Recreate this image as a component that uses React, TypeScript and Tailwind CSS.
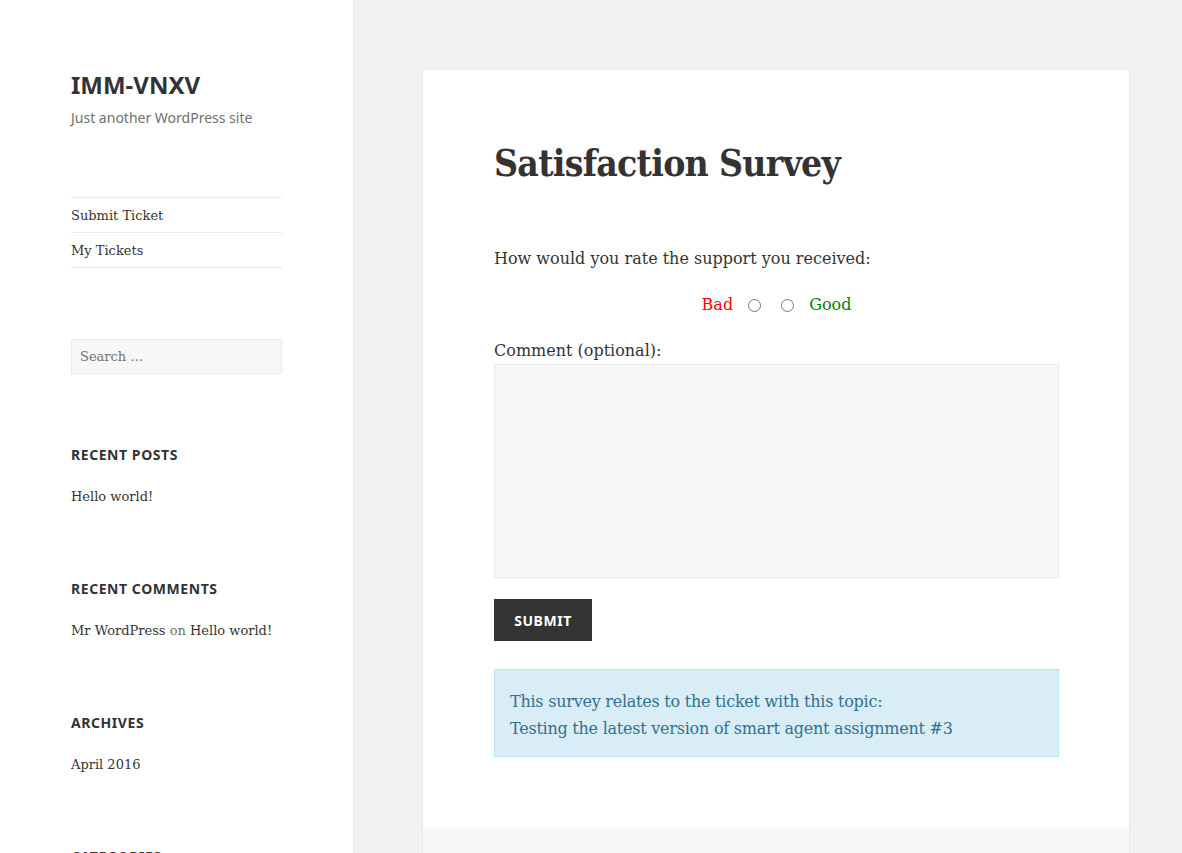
import React from 'react';

const serif = "font-['DejaVu_Serif',serif]";
const sans = "font-['Noto_Sans',sans-serif]";

const widgets = [
  { title: 'Recent Posts', body: <a>Hello world!</a> },
  {
    title: 'Recent Comments',
    body: (
      <span className="whitespace-nowrap">
        <a>Mr WordPress</a> <span className="text-[#707070]">on</span> <a>Hello world!</a>
      </span>
    ),
  },
  { title: 'Archives', body: <a>April 2016</a> },
  { title: 'Categories', body: <a>Uncategorized</a> },
];

const Sidebar: React.FC = () => (
  <aside className="w-[353px] shrink-0 bg-white shadow-[0_0_1px_rgba(0,0,0,0.15),0_0_3px_rgba(0,0,0,0.04)] relative z-10">
    <div className="ml-[71px] w-[211px] pt-[69px]">
      {/* Site branding */}
      <p className={`${sans} text-[24px] leading-[32px] font-bold text-[#333]`}>IMM-VNXV</p>
      <p className={`${sans} text-[14px] leading-[22px] text-[#707070] mt-[6px]`}>Just another WordPress site</p>

      {/* Menu */}
      <nav className={`${serif} mt-[68px] border-t border-[#eaeaea] text-[13px] text-[#333]`}>
        <div className="h-[35px] flex items-center pt-[1px] border-b border-[#eaeaea]">Submit Ticket</div>
        <div className="h-[35px] flex items-center pt-[1px] border-b border-[#eaeaea]">My Tickets</div>
      </nav>

      {/* Search */}
      <div className="mt-[71px] h-[35px] border border-[#eaeaea] bg-[#f7f7f7] flex items-center px-[8px]">
        <span className={`${serif} text-[13px] text-[#707070]`}>Search …</span>
      </div>

      {widgets.map((w, i) => (
        <section key={w.title} className={i === 0 ? 'mt-[69px]' : 'mt-[68px]'}>
          <h2 className={`${sans} uppercase font-bold text-[14px] leading-[24px] tracking-[0.04em] text-[#333]`}>
            {w.title}
          </h2>
          <div className={`${serif} text-[13px] leading-[24px] text-[#333] mt-[18px]`}>{w.body}</div>
        </section>
      ))}
    </div>
  </aside>
);

const SurveyCard: React.FC = () => (
  <article className="w-[706px] bg-white shadow-[0_0_1px_rgba(0,0,0,0.2)]">
    <div className="pl-[71px] pr-[70px] pt-[71px] pb-[71px]">
      <h1 className={`${serif} font-bold font-stretch-condensed text-[37px] leading-[44px] tracking-[-0.02em] text-[#333]`}>
        Satisfaction Survey
      </h1>

      <p className={`${serif} mt-[60px] text-[16px] leading-[28px] text-[#333]`}>
        How would you rate the support you received:
      </p>

      <div className={`${serif} mt-[18px] h-[28px] flex items-center justify-center text-[16px]`}>
        <span className="text-[#ff0000]">Bad</span>
        <input type="radio" name="rating" className="m-0 ml-[15px] w-[13px] h-[13px]" />
        <input type="radio" name="rating" className="m-0 ml-[20px] w-[13px] h-[13px]" />
        <span className="text-[#008000] ml-[15px]">Good</span>
      </div>

      <label className={`${serif} block mt-[19px] text-[16px] leading-[26px] text-[#333]`}>Comment (optional):</label>
      <textarea className="block w-full h-[214px] bg-[#f7f7f7] border border-[#eaeaea] resize-none outline-none" />

      <button
        className={`${sans} mt-[21px] h-[42px] w-[98px] bg-[#333] text-white uppercase font-bold text-[14px] tracking-[0.04em]`}
      >
        Submit
      </button>

      <div className={`${serif} mt-[28px] bg-[#d9edf7] border border-[#bce8f1] text-[#31708f] pl-[15px] pt-[18px] pb-[14px] text-[16px] leading-[27px] tracking-[-0.015em]`}>
        <p>This survey relates to the ticket with this topic:</p>
        <p>Testing the latest version of smart agent assignment #3</p>
      </div>
    </div>
    <div className="h-[60px] bg-[#f7f7f7]" />
  </article>
);

export default function App() {
  return (
    <div className="flex h-screen overflow-hidden bg-[#f1f1f1]">
      <Sidebar />
      <main className="flex-1 pt-[70px] pl-[70px]">
        <SurveyCard />
      </main>
    </div>
  );
}
